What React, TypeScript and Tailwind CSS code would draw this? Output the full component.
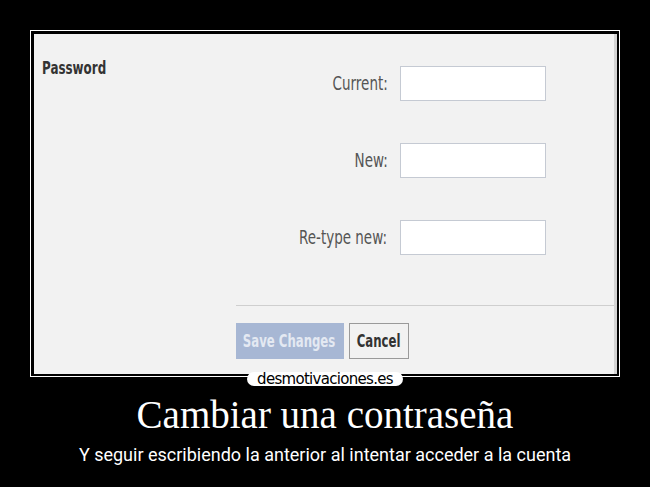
export default function App() {
  const rows = [
    { label: "Current:" },
    { label: "New:" },
    { label: "Re-type new:" },
  ];
  const fb = { fontFamily: '"DejaVu Sans", sans-serif' };

  return (
    <div className="w-[650px] h-[487px] bg-black overflow-hidden">
      {/* framed screenshot */}
      <div className="relative ml-[30px] mt-[30px] w-[590px] border-[1.5px] border-white p-[2.5px]">
        <div
          className="h-[340px] bg-[#f2f2f2] border-r-[3px] border-[#d4d4d4] text-[#4a4a4a]"
          style={fb}
        >
          <div className="flex">
            <div className="w-[202px] pl-[8px] pt-[23px] text-[17px] leading-[22px] font-bold text-[#333] whitespace-nowrap">
              <span className="inline-block origin-left scale-x-[0.7]">Password</span>
            </div>
            <div className="w-[310px] pt-[32px] flex flex-col gap-[42px]">
              {rows.map((r) => (
                <div key={r.label} className="flex items-center justify-end gap-[12px]">
                  <span className="inline-block origin-right scale-x-[0.71] text-[19px] text-[#555] whitespace-nowrap">
                    {r.label}
                  </span>
                  <div className="w-[146px] h-[35px] bg-white border border-[#c5cad3]" />
                </div>
              ))}
            </div>
          </div>
          <div className="ml-[202px] mt-[50px] border-t border-[#cfcfcf] pt-[17px] flex gap-[5px]">
            <div className="w-[108px] h-[36px] bg-[#a7b7d4] flex items-center justify-center text-[18px] font-bold text-[#e4e9f2] whitespace-nowrap">
              <span className="inline-block scale-x-[0.65]">Save Changes</span>
            </div>
            <div className="w-[60px] h-[36px] bg-[#f2f2f2] border border-[#9a9a9a] flex items-center justify-center text-[18px] font-bold text-[#333] whitespace-nowrap">
              <span className="inline-block scale-x-[0.65]">Cancel</span>
            </div>
          </div>
        </div>
        {/* watermark tab */}
        <div className="absolute left-[216px] top-[341px] w-[156px] h-[14px] bg-white rounded-[7px] flex items-center justify-center">
          <span
            className="text-[15px] leading-none text-black tracking-[-0.7px]"
            style={{ fontFamily: '"DejaVu Sans", sans-serif' }}
          >
            desmotivaciones.es
          </span>
        </div>
      </div>

      <div
        className="mt-[17px] text-center text-white text-[39px] leading-[42px]"
        style={{ fontFamily: '"Liberation Serif", serif' }}
      >
        Cambiar una contraseña
      </div>
      <div
        className="mt-[9px] text-center text-white text-[18px] leading-[20px]"
        style={{ fontFamily: 'Roboto, sans-serif' }}
      >
        Y seguir escribiendo la anterior al intentar acceder a la cuenta
      </div>
    </div>
  );
}
